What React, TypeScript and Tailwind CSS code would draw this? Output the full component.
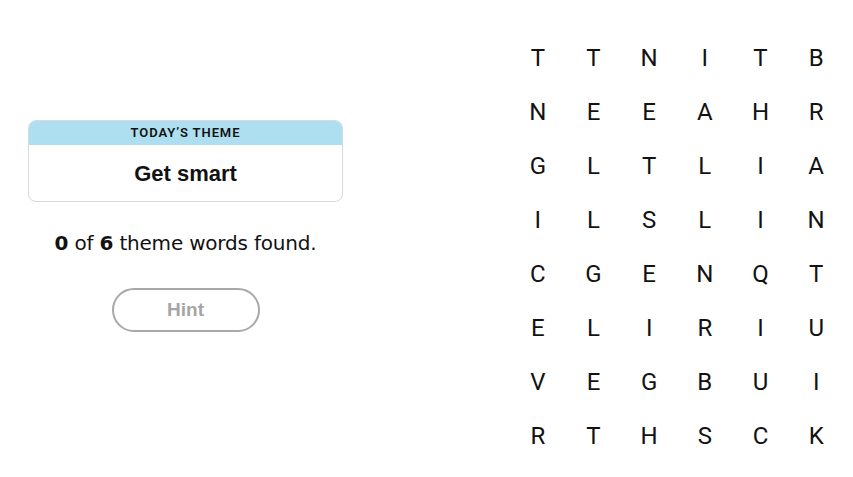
import React from 'react';

const rows = [
  'TTNITB',
  'NEEAHR',
  'GLTLIA',
  'ILSLIN',
  'CGENQT',
  'ELIRIU',
  'VEGBUI',
  'RTHSCK',
];

const ThemeCard: React.FC = () => (
  <div className="border border-[#d9d9d9] rounded-lg overflow-hidden">
    <div className="bg-[#aedff0] h-[24px] flex items-center justify-center text-[13px] font-semibold tracking-[0.07em] text-[#121212]">
      TODAY’S THEME
    </div>
    <div className="h-[56px] flex items-center justify-center font-['Liberation_Sans',sans-serif] text-[22px] font-bold text-[#121212]">
      Get smart
    </div>
  </div>
);

export default function App() {
  return (
    <div className="w-[853px] h-[477px] bg-white flex items-start pt-[30px] font-['Roboto',sans-serif] text-[#121212]">
      {/* left: theme + progress */}
      <div className="ml-[28px] mt-[90px] w-[315px] flex flex-col items-center">
        <div className="w-full">
          <ThemeCard />
        </div>
        <p className="mt-[29px] font-['DejaVu_Sans',sans-serif] text-[20px] leading-[24px] tracking-[-0.01em]">
          <span className="font-bold">0</span> of <span className="font-bold">6</span> theme words found.
        </p>
        <button className="mt-[33px] w-[148px] h-[44px] rounded-full border-2 border-[#a8a8a8] font-['Liberation_Sans',sans-serif] text-[19px] font-bold text-[#a5a5a5]">
          Hint
        </button>
      </div>

      {/* right: letter board */}
      <div className="ml-[167px] mt-[1px] w-[334px] grid grid-cols-6 content-start">
        {rows.map((row, r) =>
          row.split('').map((ch, c) => (
            <div key={`${r}-${c}`} className="h-[54px] flex items-center justify-center text-[24px] font-normal">
              {ch}
            </div>
          ))
        )}
      </div>
    </div>
  );
}
